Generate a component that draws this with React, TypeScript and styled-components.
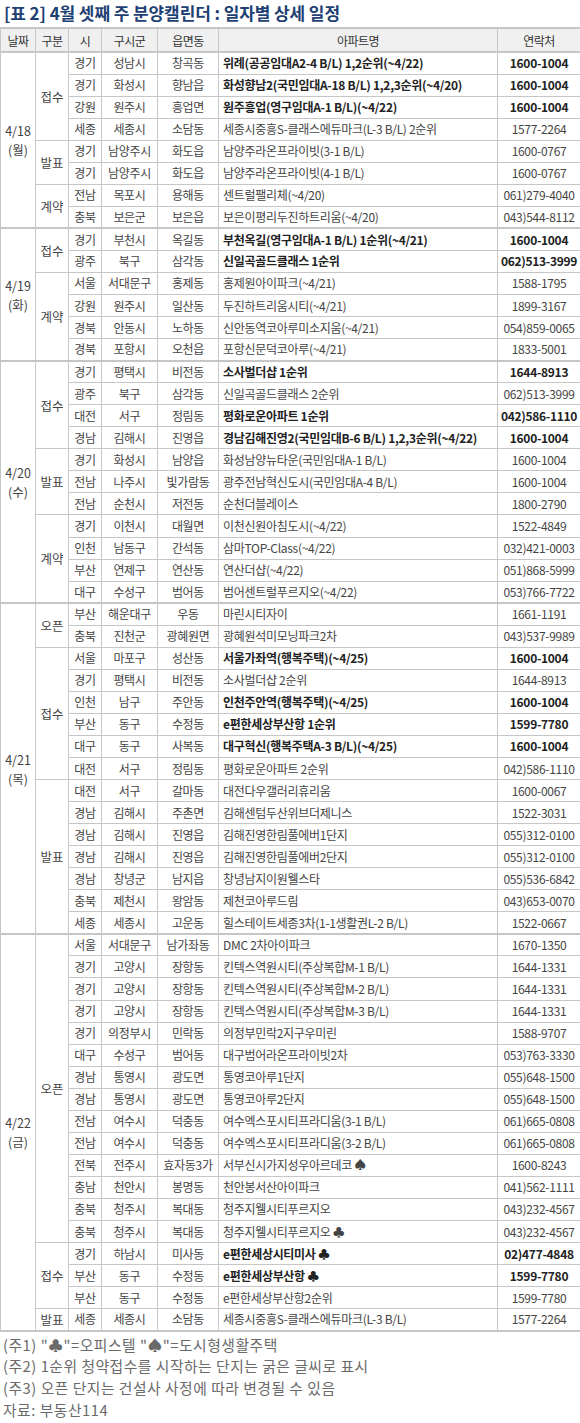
import React from "react";
import styled, { createGlobalStyle } from "styled-components";

const GlobalStyle = createGlobalStyle`
  body {
    margin: 0;
    background: #fff;
    font-family: "Noto Sans CJK KR", "Noto Sans", sans-serif;
  }
`;

type Row = [string, string, string, string, string, boolean?];
type Kind = { kind: string; rows: Row[] };
type Day = { date: string; dow: string; kinds: Kind[] };

const days: Day[] = [
  {
    date: "4/18",
    dow: "(월)",
    kinds: [
      {
        kind: "접수",
        rows: [
          ["경기", "성남시", "창곡동", "위례(공공임대A2-4 B/L) 1,2순위(~4/22)", "1600-1004", true],
          ["경기", "화성시", "향남읍", "화성향남2(국민임대A-18 B/L) 1,2,3순위(~4/20)", "1600-1004", true],
          ["강원", "원주시", "흥업면", "원주흥업(영구임대A-1 B/L)(~4/22)", "1600-1004", true],
          ["세종", "세종시", "소담동", "세종시중흥S-클래스에듀마크(L-3 B/L) 2순위", "1577-2264"],
        ],
      },
      {
        kind: "발표",
        rows: [
          ["경기", "남양주시", "화도읍", "남양주라온프라이빗(3-1 B/L)", "1600-0767"],
          ["경기", "남양주시", "화도읍", "남양주라온프라이빗(4-1 B/L)", "1600-0767"],
        ],
      },
      {
        kind: "계약",
        rows: [
          ["전남", "목포시", "용해동", "센트럴팰리체(~4/20)", "061)279-4040"],
          ["충북", "보은군", "보은읍", "보은이평리두진하트리움(~4/20)", "043)544-8112"],
        ],
      },
    ],
  },
  {
    date: "4/19",
    dow: "(화)",
    kinds: [
      {
        kind: "접수",
        rows: [
          ["경기", "부천시", "옥길동", "부천옥길(영구임대A-1 B/L) 1순위(~4/21)", "1600-1004", true],
          ["광주", "북구", "삼각동", "신일곡골드클래스 1순위", "062)513-3999", true],
        ],
      },
      {
        kind: "계약",
        rows: [
          ["서울", "서대문구", "홍제동", "홍제원아이파크(~4/21)", "1588-1795"],
          ["강원", "원주시", "일산동", "두진하트리움시티(~4/21)", "1899-3167"],
          ["경북", "안동시", "노하동", "신안동역코아루미소지움(~4/21)", "054)859-0065"],
          ["경북", "포항시", "오천읍", "포항신문덕코아루(~4/21)", "1833-5001"],
        ],
      },
    ],
  },
  {
    date: "4/20",
    dow: "(수)",
    kinds: [
      {
        kind: "접수",
        rows: [
          ["경기", "평택시", "비전동", "소사벌더샵 1순위", "1644-8913", true],
          ["광주", "북구", "삼각동", "신일곡골드클래스 2순위", "062)513-3999"],
          ["대전", "서구", "정림동", "평화로운아파트 1순위", "042)586-1110", true],
          ["경남", "김해시", "진영읍", "경남김해진영2(국민임대B-6 B/L) 1,2,3순위(~4/22)", "1600-1004", true],
        ],
      },
      {
        kind: "발표",
        rows: [
          ["경기", "화성시", "남양읍", "화성남양뉴타운(국민임대A-1 B/L)", "1600-1004"],
          ["전남", "나주시", "빛가람동", "광주전남혁신도시(국민임대A-4 B/L)", "1600-1004"],
          ["전남", "순천시", "저전동", "순천더블레이스", "1800-2790"],
        ],
      },
      {
        kind: "계약",
        rows: [
          ["경기", "이천시", "대월면", "이천신원아침도시(~4/22)", "1522-4849"],
          ["인천", "남동구", "간석동", "삼마TOP-Class(~4/22)", "032)421-0003"],
          ["부산", "연제구", "연산동", "연산더샵(~4/22)", "051)868-5999"],
          ["대구", "수성구", "범어동", "범어센트럴푸르지오(~4/22)", "053)766-7722"],
        ],
      },
    ],
  },
  {
    date: "4/21",
    dow: "(목)",
    kinds: [
      {
        kind: "오픈",
        rows: [
          ["부산", "해운대구", "우동", "마린시티자이", "1661-1191"],
          ["충북", "진천군", "광혜원면", "광혜원석미모닝파크2차", "043)537-9989"],
        ],
      },
      {
        kind: "접수",
        rows: [
          ["서울", "마포구", "성산동", "서울가좌역(행복주택)(~4/25)", "1600-1004", true],
          ["경기", "평택시", "비전동", "소사벌더샵 2순위", "1644-8913"],
          ["인천", "남구", "주안동", "인천주안역(행복주택)(~4/25)", "1600-1004", true],
          ["부산", "동구", "수정동", "e편한세상부산항 1순위", "1599-7780", true],
          ["대구", "동구", "사복동", "대구혁신(행복주택A-3 B/L)(~4/25)", "1600-1004", true],
          ["대전", "서구", "정림동", "평화로운아파트 2순위", "042)586-1110"],
        ],
      },
      {
        kind: "발표",
        rows: [
          ["대전", "서구", "갈마동", "대전다우갤러리휴리움", "1600-0067"],
          ["경남", "김해시", "주촌면", "김해센텀두산위브더제니스", "1522-3031"],
          ["경남", "김해시", "진영읍", "김해진영한림풀에버1단지", "055)312-0100"],
          ["경남", "김해시", "진영읍", "김해진영한림풀에버2단지", "055)312-0100"],
          ["경남", "창녕군", "남지읍", "창녕남지이원웰스타", "055)536-6842"],
          ["충북", "제천시", "왕암동", "제천코아루드림", "043)653-0070"],
          ["세종", "세종시", "고운동", "힐스테이트세종3차(1-1생활권L-2 B/L)", "1522-0667"],
        ],
      },
    ],
  },
  {
    date: "4/22",
    dow: "(금)",
    kinds: [
      {
        kind: "오픈",
        rows: [
          ["서울", "서대문구", "남가좌동", "DMC 2차아이파크", "1670-1350"],
          ["경기", "고양시", "장항동", "킨텍스역원시티(주상복합M-1 B/L)", "1644-1331"],
          ["경기", "고양시", "장항동", "킨텍스역원시티(주상복합M-2 B/L)", "1644-1331"],
          ["경기", "고양시", "장항동", "킨텍스역원시티(주상복합M-3 B/L)", "1644-1331"],
          ["경기", "의정부시", "민락동", "의정부민락2지구우미린", "1588-9707"],
          ["대구", "수성구", "범어동", "대구범어라온프라이빗2차", "053)763-3330"],
          ["경남", "통영시", "광도면", "통영코아루1단지", "055)648-1500"],
          ["경남", "통영시", "광도면", "통영코아루2단지", "055)648-1500"],
          ["전남", "여수시", "덕충동", "여수엑스포시티프라디움(3-1 B/L)", "061)665-0808"],
          ["전남", "여수시", "덕충동", "여수엑스포시티프라디움(3-2 B/L)", "061)665-0808"],
          ["전북", "전주시", "효자동3가", "서부신시가지성우아르데코 ♠", "1600-8243"],
          ["충남", "천안시", "봉명동", "천안봉서산아이파크", "041)562-1111"],
          ["충북", "청주시", "복대동", "청주지웰시티푸르지오", "043)232-4567"],
          ["충북", "청주시", "복대동", "청주지웰시티푸르지오 ♣", "043)232-4567"],
        ],
      },
      {
        kind: "접수",
        rows: [
          ["경기", "하남시", "미사동", "e편한세상시티미사 ♣", "02)477-4848", true],
          ["부산", "동구", "수정동", "e편한세상부산항 ♣", "1599-7780", true],
          ["부산", "동구", "수정동", "e편한세상부산항2순위", "1599-7780"],
        ],
      },
      {
        kind: "발표",
        rows: [["세종", "세종시", "소담동", "세종시중흥S-클래스에듀마크(L-3 B/L)", "1577-2264"]],
      },
    ],
  },
];

const Page = styled.div`
  width: 580px;
  color: #333;
`;

const Title = styled.h1`
  margin: 0;
  padding: 2px 0 0 4px;
  height: 25px;
  font-size: 17px;
  font-weight: 700;
  color: #1d4173;
  letter-spacing: -0.1px;
  line-height: 22px;
`;

const Table = styled.table`
  width: 580px;
  border-collapse: collapse;
  table-layout: fixed;
  border-bottom: 2px solid #c6c6c6;
`;

const HeadCell = styled.th`
  height: 22px;
  padding: 0;
  background: #f0f0f0;
  border: 1px solid #c6c6c6;
  border-top: 2px solid #c6c6c6;
  font-size: 12px;
  font-weight: 400;
  color: #333;
  text-align: center;
  letter-spacing: -0.5px;
`;

const Tr = styled.tr<{ $first?: boolean }>`
  height: 22.05px;
  & > td {
    border-top: ${(p) => (p.$first ? "2px solid #c6c6c6" : "1px solid #c6c6c6")};
  }
`;

const Cell = styled.td<{ $left?: boolean; $bold?: boolean }>`
  padding: 0 ${(p) => (p.$left ? "4px" : "0")};
  border: 1px solid #c6c6c6;
  font-size: 12px;
  line-height: 14px;
  font-weight: ${(p) => (p.$bold ? 700 : 400)};
  color: ${(p) => (p.$bold ? "#222" : "#444")};
  text-align: ${(p) => (p.$left ? "left" : "center")};
  white-space: nowrap;
  overflow: hidden;
  letter-spacing: -0.3px;
`;

const GroupCell = styled.td`
  padding: 0;
  border: 1px solid #c6c6c6;
  font-size: 12.5px;
  line-height: 19px;
  color: #444;
  text-align: center;
  vertical-align: middle;
`;

const Notes = styled.div`
  padding: 2px 0 0 3px;
  font-size: 14.8px;
  line-height: 21.6px;
  color: #6a6a6a;
  letter-spacing: 0.5px;
`;

const columns = [
  ["날짜", 35],
  ["구분", 33],
  ["시", 33],
  ["구시군", 56],
  ["읍면동", 61],
  ["아파트명", 279],
  ["연락처", 83],
] as const;

export default function App() {
  return (
    <Page>
      <GlobalStyle />
      <Title>[표 2] 4월 셋째 주 분양캘린더 : 일자별 상세 일정</Title>
      <Table>
        <colgroup>
          {columns.map(([name, w]) => (
            <col key={name} style={{ width: w }} />
          ))}
        </colgroup>
        <thead>
          <tr>
            {columns.map(([name]) => (
              <HeadCell key={name}>{name}</HeadCell>
            ))}
          </tr>
        </thead>
        <tbody>
          {days.map((day) => {
            const total = day.kinds.reduce((n, k) => n + k.rows.length, 0);
            return day.kinds.map((k, ki) =>
              k.rows.map((r, ri) => {
                const first = ki === 0 && ri === 0;
                return (
                  <Tr key={day.date + k.kind + ri} $first={first}>
                    {first && (
                      <GroupCell rowSpan={total}>
                        {day.date}
                        <br />
                        {day.dow}
                      </GroupCell>
                    )}
                    {ri === 0 && <GroupCell rowSpan={k.rows.length}>{k.kind}</GroupCell>}
                    <Cell>{r[0]}</Cell>
                    <Cell>{r[1]}</Cell>
                    <Cell>{r[2]}</Cell>
                    <Cell $left $bold={r[5]}>
                      {r[3]}
                    </Cell>
                    <Cell $bold={r[5]}>{r[4]}</Cell>
                  </Tr>
                );
              })
            );
          })}
        </tbody>
      </Table>
      <Notes>
        <div>(주1) "♣"=오피스텔 "♠"=도시형생활주택</div>
        <div>(주2) 1순위 청약접수를 시작하는 단지는 굵은 글씨로 표시</div>
        <div>(주3) 오픈 단지는 건설사 사정에 따라 변경될 수 있음</div>
        <div>자료: 부동산114</div>
      </Notes>
    </Page>
  );
}
